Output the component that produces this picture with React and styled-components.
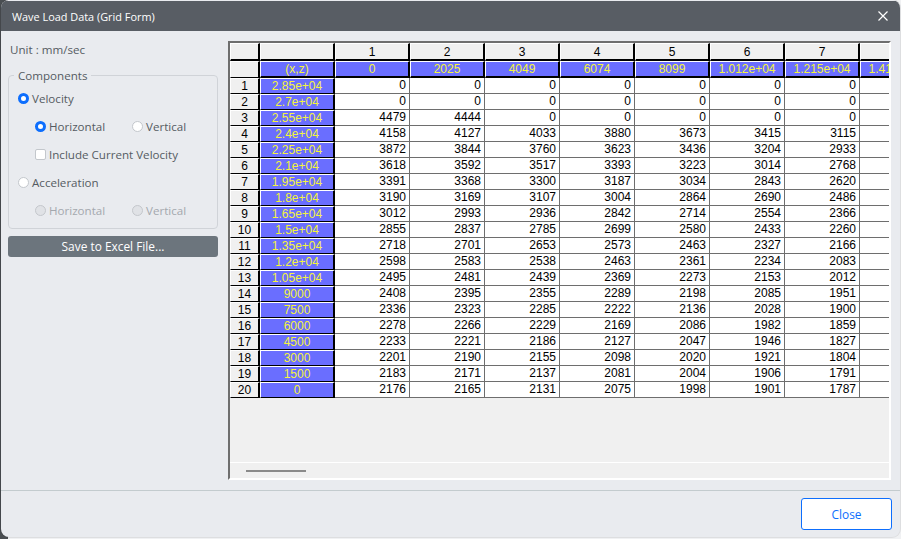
import React from 'react'
import styled, { createGlobalStyle } from 'styled-components'

const GlobalStyle = createGlobalStyle`
  html, body {
    margin: 0;
    padding: 0;
    height: 100%;
    background: linear-gradient(90deg, #4a4e52 0 8px, #f0f1f3 8px);
    overflow: hidden;
  }
`

const Dialog = styled.div`
  width: 899px;
  height: 537px;
  margin-left: 1px;
  background: #e9ebef;
  border-radius: 8px;
  box-shadow: 0 0 0 1px rgba(0, 0, 0, 0.08);
  display: flex;
  flex-direction: column;
  overflow: hidden;
  font-family: "Open Sans", "Liberation Sans", sans-serif;
  font-size: 11.6px;
  color: #555b62;
`

const TitleBar = styled.div`
  height: 30px;
  margin-top: 1px;
  flex: none;
  background: #585d64;
  display: flex;
  align-items: center;
  justify-content: space-between;
  padding: 0 9px 0 11px;
  color: #fff;
  font-size: 10.9px;
`

const CloseIcon = styled.svg`
  width: 16px;
  height: 16px;
  margin-bottom: 1px;
  display: block;
`

const Body = styled.div`
  flex: 1;
  min-height: 0;
  display: flex;
  padding: 10px 11px 10px 7px;
  gap: 10px;
`

const Side = styled.div`
  width: 210px;
  flex: none;
`

const Unit = styled.div`
  height: 18px;
  line-height: 18px;
  padding-left: 2px;
  margin-bottom: 9px;
`

const Fieldset = styled.fieldset`
  margin: 0;
  padding: 1px 9px 0 9px;
  height: 161px;
  box-sizing: border-box;
  border: 1px solid #d0d3d8;
  border-radius: 4px;
  display: flex;
  flex-direction: column;
`

const Legend = styled.legend`
  padding: 0 4px;
  margin-left: -4px;
  line-height: 15px;
`

const Line = styled.div`
  height: 28px;
  flex: none;
  display: flex;
  align-items: center;
  padding-left: ${p => (p.$nested ? 17 : 0)}px;
`

const Option = styled.div`
  display: flex;
  align-items: center;
  gap: 3px;
  width: ${p => (p.$wide ? '97px' : 'auto')};
  color: ${p => (p.$disabled ? '#a4a8ae' : 'inherit')};
`

const Radio = styled.span`
  flex: none;
  border-radius: 50%;
  background: ${p => (p.$disabled ? '#e0e2e6' : '#fff')};
  border: ${p =>
    p.$disabled ? '1px solid #c4c7cc' : p.$on ? '3px solid #0d6efd' : '1px solid #c3c7cc'};
  width: ${p => (p.$on ? 5 : 9)}px;
  height: ${p => (p.$on ? 5 : 9)}px;
`

const Check = styled.span`
  width: 9px;
  height: 9px;
  flex: none;
  background: #fff;
  border: 1px solid #c3c7cc;
  border-radius: 2px;
`

const SaveButton = styled.button`
  display: block;
  width: 210px;
  height: 21px;
  margin-top: 7px;
  padding: 0 0 1px;
  border: 0;
  border-radius: 3px;
  background: #6c757d;
  color: #fff;
  font-family: inherit;
  font-size: 11.9px;
`

const GridFrame = styled.div`
  width: 663px;
  height: 439px;
  box-sizing: border-box;
  border: 2px solid #fff;
  border-left-color: #6e6e6e;
  border-top-color: #6e6e6e;
  background: #f0f0f0;
  display: flex;
  flex-direction: column;
  font-family: "Liberation Sans", Arial, sans-serif;
  font-size: 12px;
  color: #000;
`

const GridView = styled.div`
  flex: 1;
  min-height: 0;
  overflow: hidden;
`

const Table = styled.div`
  display: grid;
  grid-template-columns: 30px repeat(9, 75px);
  width: max-content;
`

const Cell = styled.div`
  box-sizing: border-box;
  height: ${p => (p.$top ? 18 : p.$sub ? 17 : 16)}px;
  line-height: ${p => (p.$top ? 16 : 14)}px;
  border-right: 1px solid #6e6e6e;
  border-bottom: 1px solid #6e6e6e;
  background: #fff;
  text-align: right;
  padding-right: 3px;
  overflow: hidden;
  white-space: nowrap;
`

const HeadCell = styled(Cell)`
  background: #f0f0f0;
  text-align: center;
  padding-right: 0;
  border-top: 1px solid #fff;
  border-left: 1px solid #fff;
  border-right: 2px solid #000;
  border-bottom: ${p => (p.$top ? 2 : 1)}px solid #000;
`

const ValueCell = styled(Cell)`
  background: #6a6eff;
  color: #f4f43c;
  text-align: center;
  padding-right: 0;
  border-top: 1px solid #fff;
  border-left: 1px solid #fff;
  border-right: 2px solid #000;
  border-bottom: ${p => (p.$sub ? 2 : 1)}px solid #000;
`

const ScrollTrack = styled.div`
  height: 16px;
  flex: none;
  border-top: 1px solid #fff;
  box-sizing: border-box;
  display: flex;
  align-items: center;
  padding-left: 16px;
`

const ScrollThumb = styled.div`
  width: 60px;
  height: 2px;
  background: #8a8a8a;
`

const Footer = styled.div`
  height: 47px;
  box-sizing: border-box;
  flex: none;
  border-top: 1px solid #c3cbce;
  display: flex;
  justify-content: flex-end;
  align-items: flex-start;
  padding: 7px 8px 0 0;
`

const CloseButton = styled.button`
  width: 91px;
  height: 32px;
  padding: 0 0 1px;
  border: 1px solid #0d6efd;
  border-radius: 3px;
  background: #fff;
  color: #0d6efd;
  font-family: inherit;
  font-size: 11.9px;
`

const columns = ['0', '2025', '4049', '6074', '8099', '1.012e+04', '1.215e+04', '1.417e+04']

const rows = [
  ['2.85e+04', 0, 0, 0, 0, 0, 0, 0],
  ['2.7e+04', 0, 0, 0, 0, 0, 0, 0],
  ['2.55e+04', 4479, 4444, 0, 0, 0, 0, 0],
  ['2.4e+04', 4158, 4127, 4033, 3880, 3673, 3415, 3115],
  ['2.25e+04', 3872, 3844, 3760, 3623, 3436, 3204, 2933],
  ['2.1e+04', 3618, 3592, 3517, 3393, 3223, 3014, 2768],
  ['1.95e+04', 3391, 3368, 3300, 3187, 3034, 2843, 2620],
  ['1.8e+04', 3190, 3169, 3107, 3004, 2864, 2690, 2486],
  ['1.65e+04', 3012, 2993, 2936, 2842, 2714, 2554, 2366],
  ['1.5e+04', 2855, 2837, 2785, 2699, 2580, 2433, 2260],
  ['1.35e+04', 2718, 2701, 2653, 2573, 2463, 2327, 2166],
  ['1.2e+04', 2598, 2583, 2538, 2463, 2361, 2234, 2083],
  ['1.05e+04', 2495, 2481, 2439, 2369, 2273, 2153, 2012],
  ['9000', 2408, 2395, 2355, 2289, 2198, 2085, 1951],
  ['7500', 2336, 2323, 2285, 2222, 2136, 2028, 1900],
  ['6000', 2278, 2266, 2229, 2169, 2086, 1982, 1859],
  ['4500', 2233, 2221, 2186, 2127, 2047, 1946, 1827],
  ['3000', 2201, 2190, 2155, 2098, 2020, 1921, 1804],
  ['1500', 2183, 2171, 2137, 2081, 2004, 1906, 1791],
  ['0', 2176, 2165, 2131, 2075, 1998, 1901, 1787]
]

function WaveGrid() {
  return (
    <GridFrame>
      <GridView>
        <Table>
          <HeadCell $top />
          <HeadCell $top />
          {columns.map((c, i) => (
            <HeadCell $top key={c}>{i + 1}</HeadCell>
          ))}
          <HeadCell $sub />
          <ValueCell $sub>(x,z)</ValueCell>
          {columns.map(c => (
            <ValueCell $sub key={c}>{c}</ValueCell>
          ))}
          {rows.map((row, r) => (
            <React.Fragment key={r}>
              <HeadCell>{r + 1}</HeadCell>
              <ValueCell>{row[0]}</ValueCell>
              {row.slice(1).map((v, i) => (
                <Cell key={i}>{v}</Cell>
              ))}
              <Cell />
            </React.Fragment>
          ))}
        </Table>
      </GridView>
      <ScrollTrack>
        <ScrollThumb />
      </ScrollTrack>
    </GridFrame>
  )
}

export default function App() {
  return (
    <>
      <GlobalStyle />
      <Dialog>
        <TitleBar>
          Wave Load Data (Grid Form)
          <CloseIcon viewBox="0 0 16 16">
            <path d="M3.5 3.5l9 9M12.5 3.5l-9 9" stroke="#fff" strokeWidth="1.2" fill="none" />
          </CloseIcon>
        </TitleBar>
        <Body>
          <Side>
            <Unit>Unit : mm/sec</Unit>
            <Fieldset>
              <Legend>Components</Legend>
              <Line>
                <Option><Radio $on />Velocity</Option>
              </Line>
              <Line $nested>
                <Option $wide><Radio $on />Horizontal</Option>
                <Option><Radio />Vertical</Option>
              </Line>
              <Line $nested>
                <Option><Check />Include Current Velocity</Option>
              </Line>
              <Line>
                <Option><Radio />Acceleration</Option>
              </Line>
              <Line $nested>
                <Option $wide $disabled><Radio $disabled />Horizontal</Option>
                <Option $disabled><Radio $disabled />Vertical</Option>
              </Line>
            </Fieldset>
            <SaveButton>Save to Excel File...</SaveButton>
          </Side>
          <WaveGrid />
        </Body>
        <Footer>
          <CloseButton>Close</CloseButton>
        </Footer>
      </Dialog>
    </>
  )
}
